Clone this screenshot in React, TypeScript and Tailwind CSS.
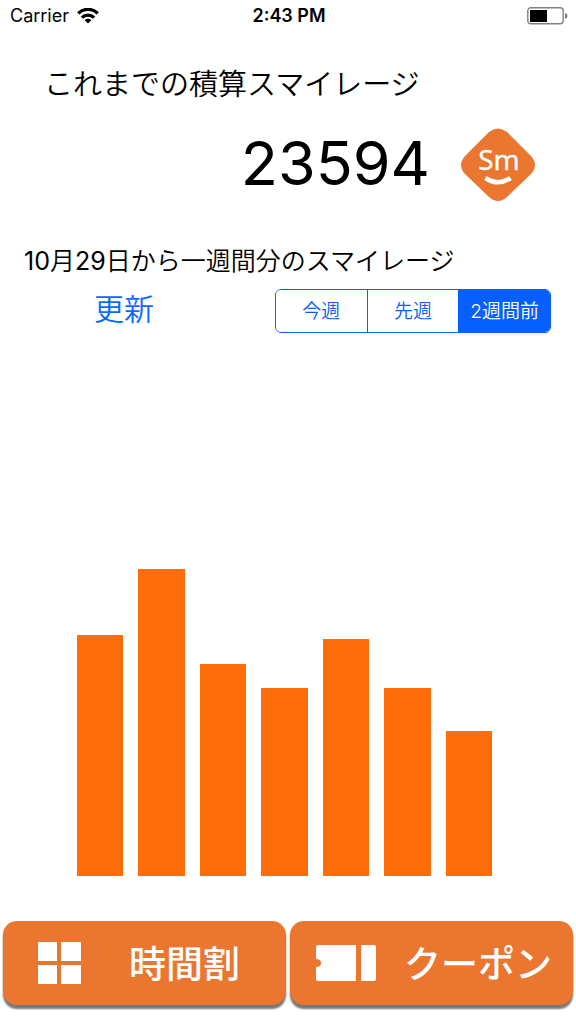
import { useState } from "react";

const bars = [241, 307, 212, 188, 237, 188, 145];
const periods = ["今週", "先週", "2週間前"];

function StatusBar() {
  return (
    <header className="grid h-8 grid-cols-3 items-center pr-2 pl-[10px] text-lg leading-8">
      <div className="flex items-center gap-2">
        <span>Carrier</span>
        <svg width="22" height="16" viewBox="0 0 22 16" aria-label="Wi-Fi">
          <g fill="none" stroke="#000" strokeWidth="3.4">
            <path d="M1.3 5.4 A13.8 13.8 0 0 1 20.7 5.4" />
            <path d="M4.9 9.6 A8.7 8.7 0 0 1 17.1 9.6" />
          </g>
          <path d="M11 15.4 L7.6 12.2 A4.9 4.9 0 0 1 14.4 12.2 Z" fill="#000" />
        </svg>
      </div>
      <span className="text-center font-semibold">2:43 PM</span>
      <svg className="justify-self-end" width="41" height="18" viewBox="0 0 41 18" aria-label="Battery">
        <rect x="0.8" y="0.8" width="35.4" height="16" rx="3" fill="none" stroke="#808080" strokeWidth="1.4" />
        <rect x="3" y="3" width="17" height="12" fill="#000" />
        <path d="M38 6 Q40.6 6.6 40.6 9 Q40.6 11.4 38 12 Z" fill="#808080" />
      </svg>
    </header>
  );
}

function SmileLogo() {
  return (
    <svg width="76" height="74" viewBox="0 0 76 74" role="img" aria-label="Sm">
      <path
        d="M29 4 Q38 -3 47 4 L71 28 Q79 37 71 46 L47 69 Q38 77 29 69 L5 46 Q-3 37 5 28 Z"
        fill="#ea762f"
      />
      <text x="39" y="42" textAnchor="middle" fontSize="28" fill="#fff" stroke="#fff" strokeWidth="0.3" className="font-['Noto_Sans',sans-serif]">
        Sm
      </text>
      <path d="M25.500 50 Q38 58.500 50.500 50" fill="none" stroke="#fff" strokeWidth="4.6" />
    </svg>
  );
}

function GridIcon() {
  return (
    <svg width="43" height="43" viewBox="0 0 43 43" fill="#fff" aria-hidden="true">
      <rect width="19" height="19" />
      <rect x="23" width="20" height="19" />
      <rect y="23" width="19" height="19" />
      <rect x="23" y="23" width="20" height="19" />
    </svg>
  );
}

function TicketIcon() {
  return (
    <svg width="60" height="36" viewBox="0 0 60 36" fill="#fff" aria-hidden="true">
      <path d="M2 0 H40 V36 H2 Q0 36 0 34 V22 Q5 22 5 18 Q5 14 0 14 V2 Q0 0 2 0 Z" />
      <path d="M45 0 H58 Q60 0 60 2 V34 Q60 36 58 36 H45 Z" />
    </svg>
  );
}

const actionClass =
  "flex h-[84px] items-center rounded-[14px] bg-[#ea762f] font-['Noto_Sans_CJK_JP',sans-serif] text-[37px] font-medium text-white shadow-[0_4px_2px_#777]";

export default function App() {
  const [selected, setSelected] = useState(2);
  return (
    <div className="min-h-screen bg-white font-['Inter','Noto_Sans_CJK_JP_DemiLight','Noto_Sans_CJK_JP',sans-serif] text-black">
      <StatusBar />
      <main>
        <h1 className="mt-[30px] pl-11 font-['Noto_Sans_CJK_JP_DemiLight','Noto_Sans_CJK_JP',sans-serif] text-[29px] leading-10 font-[350]">
          これまでの積算スマイレージ
        </h1>
        <div className="mt-[26px] flex items-center justify-end gap-[30px] pr-10">
          <span className="pb-1 text-[61px] leading-[70px]">23594</span>
          <SmileLogo />
        </div>
        <h2 className="mt-[39px] pl-6 text-[25px] leading-10 font-[380]">10月29日から一週間分のスマイレージ</h2>
        <div className="mt-2 flex items-center justify-between pr-[25px] pl-[94px]">
          <button className="pb-1 text-3xl leading-10 font-[350] text-[#0b69ff]">更新</button>
          <div role="group" aria-label="期間" className="flex h-11 w-[276px] overflow-hidden rounded-md border border-[#085fff]">
            {periods.map((p, i) => (
              <button
                key={p}
                aria-pressed={selected === i}
                onClick={() => setSelected(i)}
                className={
                  "flex-1 border-[#085fff] pt-0.5 text-[19px] font-[350] not-first:border-l " +
                  (selected === i ? "bg-[#085fff] text-white" : "bg-white text-[#085fff]")
                }
              >
                {p}
              </button>
            ))}
          </div>
        </div>
        <div role="img" aria-label="一週間分のスマイレージ" className="mt-14 flex h-[487px] items-end gap-[15px] pr-[84px] pl-[77px]">
          {bars.map((h, i) => (
            <div key={i} className="flex-1 bg-[#ff6c0a]" style={{ height: h }} />
          ))}
        </div>
      </main>
      <nav className="mt-[45px] grid grid-cols-2 gap-1 px-[3px] pb-5">
        <button className={actionClass + " gap-12 pl-[35px]"}>
          <GridIcon />
          時間割
        </button>
        <button className={actionClass + " gap-7 pl-[26px]"}>
          <TicketIcon />
          クーポン
        </button>
      </nav>
    </div>
  );
}
